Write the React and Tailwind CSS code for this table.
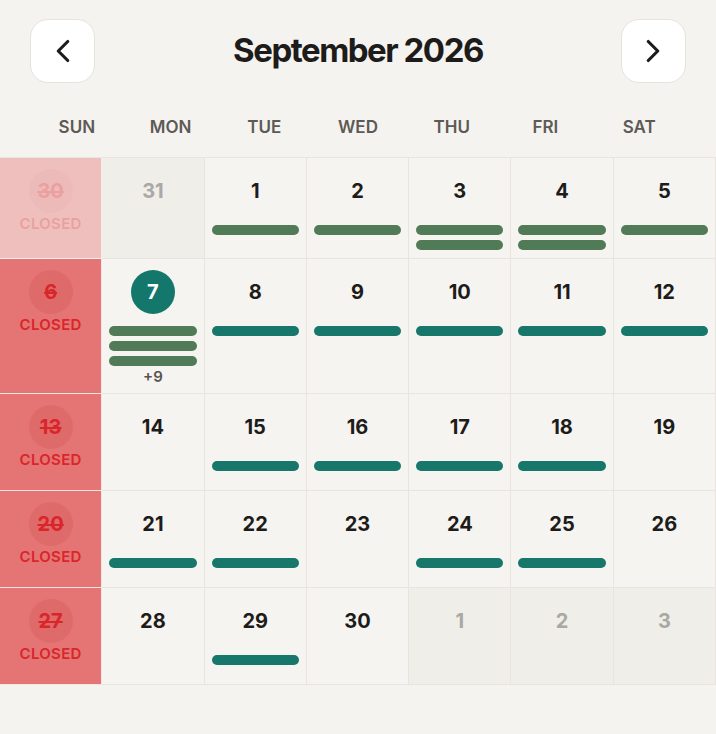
import React from 'react';
import { ChevronLeft, ChevronRight } from 'lucide-react';

const WEEKDAYS = ['SUN', 'MON', 'TUE', 'WED', 'THU', 'FRI', 'SAT'];

// g = green (booked), t = teal (open)
const WEEKS = [
    [
        { day: 30, closed: true, faded: true },
        { day: 31, outside: true },
        { day: 1, bars: ['g'] },
        { day: 2, bars: ['g'] },
        { day: 3, bars: ['g', 'g'] },
        { day: 4, bars: ['g', 'g'] },
        { day: 5, bars: ['g'] },
    ],
    [
        { day: 6, closed: true },
        { day: 7, today: true, bars: ['g', 'g', 'g'], more: 9 },
        { day: 8, bars: ['t'] },
        { day: 9, bars: ['t'] },
        { day: 10, bars: ['t'] },
        { day: 11, bars: ['t'] },
        { day: 12, bars: ['t'] },
    ],
    [
        { day: 13, closed: true },
        { day: 14 },
        { day: 15, bars: ['t'] },
        { day: 16, bars: ['t'] },
        { day: 17, bars: ['t'] },
        { day: 18, bars: ['t'] },
        { day: 19 },
    ],
    [
        { day: 20, closed: true },
        { day: 21, bars: ['t'] },
        { day: 22, bars: ['t'] },
        { day: 23 },
        { day: 24, bars: ['t'] },
        { day: 25, bars: ['t'] },
        { day: 26 },
    ],
    [
        { day: 27, closed: true },
        { day: 28 },
        { day: 29, bars: ['t'] },
        { day: 30 },
        { day: 1, outside: true },
        { day: 2, outside: true },
        { day: 3, outside: true },
    ],
];

function DayCell({ cell }) {
    if (cell.closed) {
        return (
            <div className={`flex flex-col items-center pt-[11px] pb-[8px] min-h-[97px] bg-[#e57474] border-r border-b border-[#f3e6e4] ${cell.faded ? 'opacity-40' : ''}`}>
                <div className="w-[44px] h-[44px] rounded-full bg-[#df6a6a] flex items-center justify-center text-[20px] font-bold text-[#d9262a] line-through leading-none">
                    {cell.day}
                </div>
                <span className="mt-[3px] text-[15px] leading-[16px] font-semibold tracking-[0.02em] text-[#d9262a]">CLOSED</span>
            </div>
        );
    }

    return (
        <div className={`flex flex-col items-center pt-[11px] pb-[8px] px-[7px] min-h-[97px] border-r border-b border-[#e8e5df] ${cell.outside ? 'bg-[#efeee9]' : 'bg-[#f5f4f0]'}`}>
            <div
                className={`w-[44px] h-[44px] rounded-full flex items-center justify-center text-[20px] font-bold leading-none ${
                    cell.today ? 'bg-[#13786b] text-white' : cell.outside ? 'text-[#aaa8a3]' : 'text-[#1d1c1a]'
                }`}
            >
                {cell.day}
            </div>
            {cell.bars && (
                <div className="mt-[12px] w-full flex flex-col gap-[5px]">
                    {cell.bars.map((b, i) => (
                        <div key={i} className={`h-[10px] rounded-full ${b === 'g' ? 'bg-[#517b56]' : 'bg-[#16776a]'}`} />
                    ))}
                </div>
            )}
            {cell.more && (
                <span className="mt-[2px] text-[15px] leading-[17px] font-semibold text-[#555350]">+{cell.more}</span>
            )}
        </div>
    );
}

export default function App() {
    return (
        <div className="min-h-screen w-[716px] bg-[#f5f3ef] font-['Inter',sans-serif]">
            {/* Month header */}
            <header className="flex items-center justify-between px-[30px] pt-[19px]">
                <button className="w-[65px] h-[64px] rounded-[18px] bg-white border border-[#e6e3dd] flex items-center justify-center">
                    <ChevronLeft className="w-[38px] h-[38px] text-[#1d1c1a]" strokeWidth={2} />
                </button>
                <h1 className="text-[33px] font-bold tracking-[-0.045em] text-[#1d1c1a]">September 2026</h1>
                <button className="w-[65px] h-[64px] rounded-[18px] bg-white border border-[#e6e3dd] flex items-center justify-center">
                    <ChevronRight className="w-[38px] h-[38px] text-[#1d1c1a]" strokeWidth={2} />
                </button>
            </header>

            {/* Weekday labels */}
            <div className="grid grid-cols-7 px-[30px] pt-[34px] pb-[20px]">
                {WEEKDAYS.map((d) => (
                    <div key={d} className="text-center text-[17px] leading-[20px] font-semibold text-[#5d5a55]">
                        {d}
                    </div>
                ))}
            </div>

            {/* Calendar grid */}
            <div className="grid grid-cols-7 border-t border-[#e8e5df]">
                {WEEKS.flat().map((cell, i) => (
                    <DayCell key={i} cell={cell} />
                ))}
            </div>
        </div>
    );
}
